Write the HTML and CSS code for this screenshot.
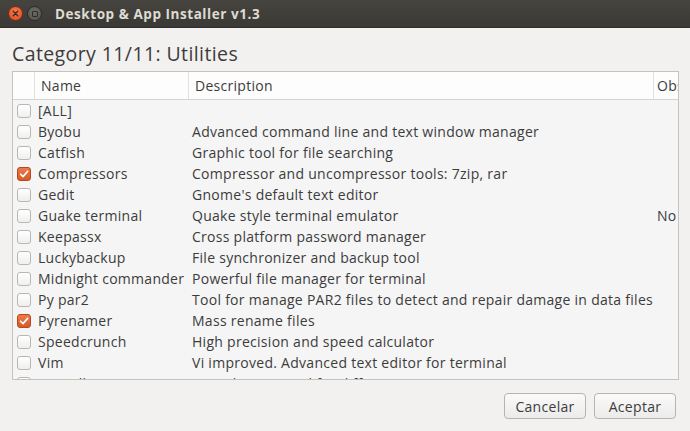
FILE: index.html
```html
<!DOCTYPE html>
<html>
<head>
<meta charset="utf-8">
<link rel="stylesheet" href="styles.css">
</head>
<body>
<div class="window">
  <div class="titlebar">
    <span class="btn-close"><svg width="14" height="14" viewBox="0 0 14 14"><path d="M4.6 4.6L9.4 9.4M9.4 4.6L4.6 9.4" stroke="#3a2a22" stroke-width="1.4" stroke-linecap="round"/></svg></span>
    <span class="btn-max"><span class="sq"></span></span>
    <span class="title">Desktop &amp; App Installer v1.3</span>
  </div>
  <div class="content">
    <h1 class="heading">Category 11/11: Utilities</h1>
    <div class="tree">
      <div class="row header">
        <div class="c-check"></div>
        <div class="c-name">Name</div>
        <div class="c-desc">Description</div>
        <div class="c-obs">Observations</div>
      </div>
      <div class="body">
        <div class="row"><div class="c-check"><span class="cb"></span></div><div class="c-name">[ALL]</div><div class="c-desc"></div><div class="c-obs"></div></div>
        <div class="row"><div class="c-check"><span class="cb"></span></div><div class="c-name">Byobu</div><div class="c-desc">Advanced command line and text window manager</div><div class="c-obs"></div></div>
        <div class="row"><div class="c-check"><span class="cb"></span></div><div class="c-name">Catfish</div><div class="c-desc">Graphic tool for file searching</div><div class="c-obs"></div></div>
        <div class="row"><div class="c-check"><span class="cb on"><svg width="10" height="10" viewBox="0 0 10 10"><path d="M1.6 5.2L4 7.6L8.6 2.4" fill="none" stroke="#fff" stroke-width="1.6" stroke-linecap="round" stroke-linejoin="round"/></svg></span></div><div class="c-name">Compressors</div><div class="c-desc">Compressor and uncompressor tools: 7zip, rar</div><div class="c-obs"></div></div>
        <div class="row"><div class="c-check"><span class="cb"></span></div><div class="c-name">Gedit</div><div class="c-desc">Gnome's default text editor</div><div class="c-obs"></div></div>
        <div class="row"><div class="c-check"><span class="cb"></span></div><div class="c-name">Guake terminal</div><div class="c-desc">Quake style terminal emulator</div><div class="c-obs">No</div></div>
        <div class="row"><div class="c-check"><span class="cb"></span></div><div class="c-name">Keepassx</div><div class="c-desc">Cross platform password manager</div><div class="c-obs"></div></div>
        <div class="row"><div class="c-check"><span class="cb"></span></div><div class="c-name">Luckybackup</div><div class="c-desc">File synchronizer and backup tool</div><div class="c-obs"></div></div>
        <div class="row"><div class="c-check"><span class="cb"></span></div><div class="c-name">Midnight commander</div><div class="c-desc">Powerful file manager for terminal</div><div class="c-obs"></div></div>
        <div class="row"><div class="c-check"><span class="cb"></span></div><div class="c-name">Py par2</div><div class="c-desc">Tool for manage PAR2 files to detect and repair damage in data files</div><div class="c-obs"></div></div>
        <div class="row"><div class="c-check"><span class="cb on"><svg width="10" height="10" viewBox="0 0 10 10"><path d="M1.6 5.2L4 7.6L8.6 2.4" fill="none" stroke="#fff" stroke-width="1.6" stroke-linecap="round" stroke-linejoin="round"/></svg></span></div><div class="c-name">Pyrenamer</div><div class="c-desc">Mass rename files</div><div class="c-obs"></div></div>
        <div class="row"><div class="c-check"><span class="cb"></span></div><div class="c-name">Speedcrunch</div><div class="c-desc">High precision and speed calculator</div><div class="c-obs"></div></div>
        <div class="row"><div class="c-check"><span class="cb"></span></div><div class="c-name">Vim</div><div class="c-desc">Vi improved. Advanced text editor for terminal</div><div class="c-obs"></div></div>
        <div class="row"><div class="c-check"><span class="cb"></span></div><div class="c-name">Virtualbox</div><div class="c-desc">Virtualization tool for different operating systems</div><div class="c-obs"></div></div>
      </div>
    </div>
    <div class="actions">
      <button class="button">Cancelar</button>
      <button class="button">Aceptar</button>
    </div>
  </div>
</div>
</body>
</html>
```
FILE: styles.css
```css
* { box-sizing: border-box; }
html, body { margin: 0; padding: 0; }
body {
  width: 690px;
  height: 431px;
  overflow: hidden;
  background: #f2f1f0;
  font-family: "Open Sans", "Noto Sans", "DejaVu Sans", sans-serif;
  color: #3c3c3c;
}
.window { display: flex; flex-direction: column; height: 431px; }
.titlebar {
  height: 28px;
  flex: none;
  display: flex;
  align-items: center;
  padding-left: 8px;
  background: linear-gradient(#45443f, #3a3935);
  border-bottom: 1px solid #2f2e2a;
}
.btn-close {
  width: 15px; height: 15px; border-radius: 50%;
  background: radial-gradient(circle at 50% 35%, #f47a4f, #df4a1a);
  border: 1px solid #7a2e14;
  display: flex; align-items: center; justify-content: center;
}
.btn-close svg { width: 13px; height: 13px; }
.btn-max {
  margin-left: 4px;
  width: 15px; height: 15px; border-radius: 50%;
  background: radial-gradient(circle at 50% 35%, #6b6a65, #54534f);
  border: 1px solid #2c2b28;
  display: flex; align-items: center; justify-content: center;
}
.btn-max .sq { width: 6px; height: 6px; border: 1px solid #2e2d2a; border-radius: 1px; }
.title {
  margin-left: 13px;
  color: #dfdbd2;
  font-weight: bold;
  font-size: 13.5px;
  letter-spacing: 0.55px;
}
.content {
  flex: 1;
  display: flex;
  flex-direction: column;
  padding: 0 12px 0 12px;
}
.heading {
  margin: 11px 0 0 0;
  font-weight: normal;
  font-size: 19.5px;
  line-height: 30px;
  height: 32px;
  letter-spacing: 0.4px;
  color: #3c3c3c;
}
.tree {
  height: 309px;
  border: 1px solid #c5c3bf;
  background: #f5f5f5;
  overflow: hidden;
  display: flex;
  flex-direction: column;
  width: 667px;
}
.row {
  display: flex;
  height: 21px;
  align-items: center;
  font-size: 14px;
  letter-spacing: 0.28px;
  white-space: nowrap;
  flex: none;
}
.row.header {
  height: 28px;
  background: #fdfdfd;
  border-bottom: 1px solid #d5d3cf;
}
.row.header > div { height: 100%; display: flex; align-items: center; border-right: 1px solid #e3e1de; }
.c-check { width: 22px; flex: none; display: flex; align-items: center; padding-left: 4px; }
.c-name { width: 154px; flex: none; padding-left: 3px; }
.c-desc { width: 465px; flex: none; padding-left: 3px; }
.c-obs { width: 120px; flex: none; padding-left: 3px; }
.header .c-name, .header .c-desc { padding-left: 6px; }
.header .c-obs { padding-left: 3px; }
.cb {
  width: 14px; height: 14px;
  border: 1px solid #b9b7b3;
  border-radius: 3px;
  background: linear-gradient(#ffffff, #f0efee);
  display: flex; align-items: center; justify-content: center;
}
.cb.on {
  background: linear-gradient(#ee7a4a, #d75a26);
  border-color: #b5481c;
}
.actions {
  display: flex;
  justify-content: flex-end;
  gap: 8px;
  margin-top: 13px;
  padding-right: 2px;
}
.button {
  width: 82px;
  height: 26px;
  padding: 0;
  font-family: inherit;
  font-size: 14px;
  letter-spacing: 0.3px;
  color: #3c3c3c;
  border: 1px solid #b6b4b0;
  border-radius: 4px;
  background: linear-gradient(#fafafa, #ecebea);
}
```
